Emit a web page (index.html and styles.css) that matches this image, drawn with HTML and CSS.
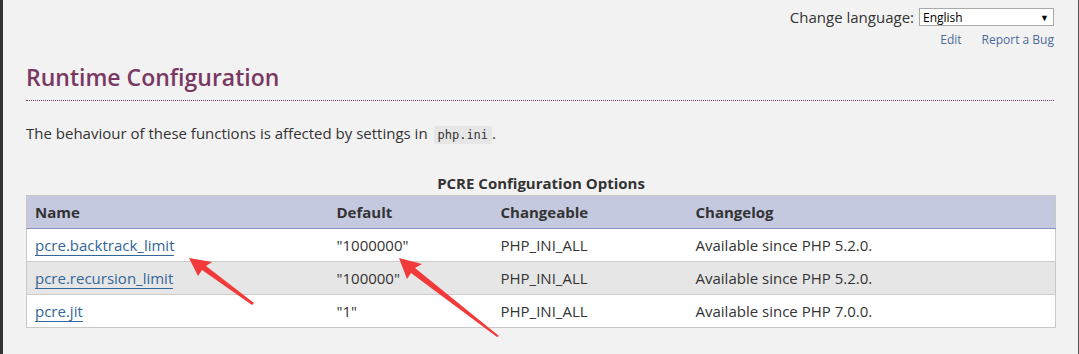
FILE: index.html
```html
<!DOCTYPE html>
<html lang="en">
<head>
<meta charset="utf-8">
<title>Runtime Configuration</title>
<link rel="stylesheet" href="styles.css">
</head>
<body>
<div class="page">
  <div class="topbar">
    <div class="lang">
      <span class="lang-label">Change language:</span>
      <div class="select"><span>English</span><span class="caret">▼</span></div>
    </div>
    <div class="edit-links">
      <a href="#">Edit</a>
      <a href="#">Report a Bug</a>
    </div>
  </div>

  <h2 class="title">Runtime Configuration</h2>

  <p class="para">The behaviour of these functions is affected by settings in <code>php.ini</code>.</p>

  <table class="opts">
    <caption>PCRE Configuration Options</caption>
    <colgroup>
      <col class="c1"><col class="c2"><col class="c3"><col class="c4">
    </colgroup>
    <thead>
      <tr><th>Name</th><th>Default</th><th>Changeable</th><th>Changelog</th></tr>
    </thead>
    <tbody>
      <tr><td><a href="#">pcre.backtrack_limit</a></td><td>"1000000"</td><td>PHP_INI_ALL</td><td>Available since PHP 5.2.0.</td></tr>
      <tr><td><a href="#">pcre.recursion_limit</a></td><td>"100000"</td><td>PHP_INI_ALL</td><td>Available since PHP 5.2.0.</td></tr>
      <tr><td><a href="#">pcre.jit</a></td><td>"1"</td><td>PHP_INI_ALL</td><td>Available since PHP 7.0.0.</td></tr>
    </tbody>
  </table>

  <svg class="arrows" width="1079" height="354" viewBox="0 0 1079 354">
    <polygon fill="#f23a3a" points="189,258 212,262 206,266 254,303 252,305 202,270 198,276"/>
    <polygon fill="#f23a3a" points="399,258 422,264 415,268 499,336 497,337 411,273 407,279"/>
  </svg>
</div>
</body>
</html>
```

FILE: styles.css
```css
html, body {
  margin: 0;
  padding: 0;
  background: #f2f2f2;
}
body {
  font-family: "Open Sans", "Noto Sans", sans-serif;
  color: #333;
}
.page {
  position: relative;
  width: 1079px;
  height: 354px;
  box-sizing: border-box;
  border-left: 3px solid #333;
  border-right: 1px solid #555;
  padding: 0 24px 0 23px;
  overflow: hidden;
}
.topbar {
  display: flex;
  flex-direction: column;
  align-items: flex-end;
  padding-top: 8px;
}
.lang {
  display: flex;
  align-items: center;
  gap: 5px;
  height: 18px;
}
.lang-label {
  font-size: 15px;
  color: #333;
}
.select {
  width: 135px;
  height: 18px;
  box-sizing: border-box;
  border: 1px solid #a9a9a9;
  background: #fff;
  display: flex;
  align-items: center;
  justify-content: space-between;
  padding: 0 4px 0 3px;
  font-size: 12px;
  color: #000;
}
.caret {
  font-size: 9px;
}
.edit-links {
  display: flex;
  gap: 20px;
  margin-top: 5px;
  font-size: 12px;
}
.edit-links a {
  color: #4b6a99;
  text-decoration: none;
}
.title {
  margin: 13px 0 0;
  font-size: 23px;
  font-weight: 600;
  color: #793862;
  line-height: 32px;
  padding-bottom: 7px;
  border-bottom: 1px dotted #793862;
}
.para {
  margin: 20px 0 0;
  font-size: 15px;
  line-height: 24px;
}
.para code {
  font-family: "DejaVu Sans Mono", "Liberation Mono", monospace;
  font-size: 12px;
  background: #e6e6e6;
  padding: 2px 4px;
  border-radius: 2px;
  margin-left: 2px;
}
.opts {
  margin-top: 24px;
  width: 1029px;
  border-collapse: collapse;
  table-layout: fixed;
  background: #fff;
  border: 1px solid #c8c8c8;
  font-size: 15px;
}
.opts caption {
  font-weight: 700;
  font-size: 15px;
  line-height: 24px;
  padding-bottom: 0;
  background: transparent;
}
.c1 { width: 302px; }
.c2 { width: 164px; }
.c3 { width: 195px; }
.c4 { width: 368px; }
.opts th {
  background: #c4c9df;
  text-align: left;
  font-weight: 700;
  height: 33px;
  padding: 0 8px;
  box-sizing: border-box;
  border-bottom: 1px solid #8892bf;
}
.opts td {
  height: 33px;
  padding: 0 8px;
  box-sizing: border-box;
  border-top: 1px solid #cccccc;
}
.opts tbody tr:nth-child(2) td {
  background: #e6e6e6;
}
.opts td a {
  color: #336699;
  text-decoration: none;
  border-bottom: 1px solid #336699;
}
.arrows {
  position: absolute;
  left: -3px;
  top: 0;
  pointer-events: none;
}
```
